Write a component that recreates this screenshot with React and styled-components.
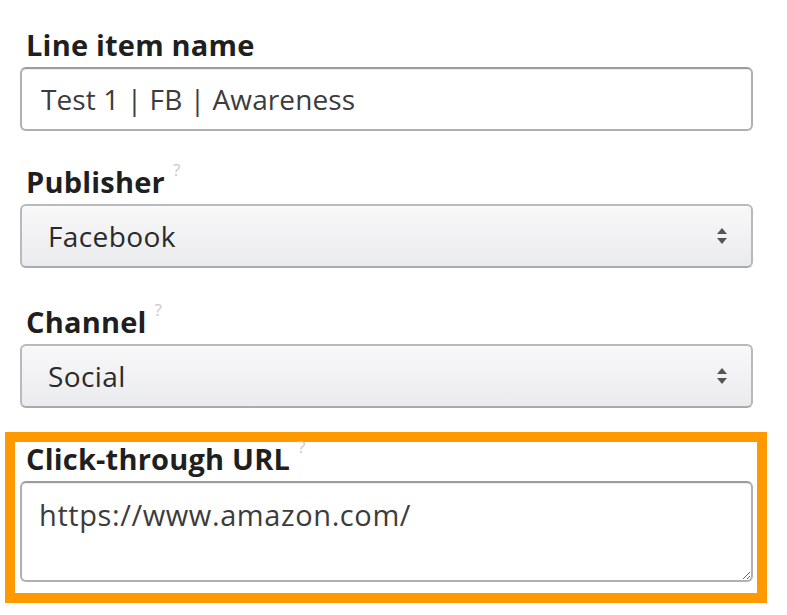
import React from "react";
import styled, { createGlobalStyle } from "styled-components";

const GlobalStyle = createGlobalStyle`
  body {
    margin: 0;
    background: #ffffff;
    font-family: "Open Sans", "Noto Sans", sans-serif;
  }
`;

const Page = styled.div`
  width: 787px;
  height: 615px;
  box-sizing: border-box;
  padding: 28px 34px 0 20px;
  display: flex;
  flex-direction: column;
  overflow: hidden;
`;

const Field = styled.div`
  display: flex;
  flex-direction: column;
  margin-bottom: ${(p) => p.gap || 0}px;
`;

const Label = styled.div`
  display: flex;
  align-items: flex-start;
  height: 34px;
  line-height: 34px;
  margin: 0 0 5px 6px;
  font-size: 29px;
  font-weight: 700;
  color: #1f1f1f;
  letter-spacing: 0.2px;
`;

const Hint = styled.span`
  font-size: 17px;
  line-height: 17px;
  font-weight: 400;
  color: #c8c8c8;
  margin: -4px 0 0 8px;
`;

const TextInput = styled.input`
  box-sizing: border-box;
  width: 733px;
  height: 64px;
  padding: 0 18px 0 19px;
  border: 2px solid #b0b0b0;
  border-top-color: #9c9c9c;
  border-radius: 6px;
  box-shadow: inset 0 1px 1px rgba(0, 0, 0, 0.08);
  font-family: inherit;
  font-size: 28px;
  letter-spacing: 0.1px;
  color: #3c3c3c;
  outline: none;
`;

const SelectBox = styled.div`
  box-sizing: border-box;
  width: 733px;
  height: 64px;
  display: flex;
  align-items: center;
  justify-content: space-between;
  padding: 0 24px 0 26px;
  border: 2px solid #b7b9bd;
  border-bottom-color: #a7aaae;
  border-radius: 6px;
  background: linear-gradient(#f8f8f9, #eaebed);
  box-shadow: 0 1px 0 rgba(255, 255, 255, 0.6) inset;
  font-size: 28px;
  letter-spacing: 0.4px;
  color: #2a2a2a;
`;

const Highlight = styled.div`
  margin: 0 -14px 0 -15px;
  border: 10px solid #ff9900;
  padding: 0 4px 11px 5px;
  display: flex;
  flex-direction: column;
`;

const TextArea = styled.textarea`
  box-sizing: border-box;
  width: 733px;
  height: 101px;
  padding: 16px 17px;
  border: 2px solid #b0b0b0;
  border-top-color: #9c9c9c;
  border-radius: 6px;
  box-shadow: inset 0 1px 1px rgba(0, 0, 0, 0.08);
  font-family: inherit;
  font-size: 29px;
  letter-spacing: 0.6px;
  line-height: 32px;
  color: #3c3c3c;
  resize: both;
  outline: none;
`;

const Arrows = () => (
  <svg width="10" height="16" viewBox="0 0 10 16">
    <path d="M5 0 L10 6 L0 6 Z" fill="#555" />
    <path d="M5 16 L10 10 L0 10 Z" fill="#555" />
  </svg>
);

const Select = ({ value }) => (
  <SelectBox>
    <span>{value}</span>
    <Arrows />
  </SelectBox>
);

export default function App() {
  return (
    <Page>
      <GlobalStyle />
      <Field gap={34}>
        <Label>Line item name</Label>
        <TextInput defaultValue="Test 1 | FB | Awareness" />
      </Field>
      <Field gap={37}>
        <Label>
          Publisher<Hint>?</Hint>
        </Label>
        <Select value="Facebook" />
      </Field>
      <Field gap={24}>
        <Label>
          Channel<Hint>?</Hint>
        </Label>
        <Select value="Social" />
      </Field>
      <Highlight>
        <Label>
          Click-through URL<Hint>?</Hint>
        </Label>
        <TextArea defaultValue="https://www.amazon.com/" />
      </Highlight>
    </Page>
  );
}
